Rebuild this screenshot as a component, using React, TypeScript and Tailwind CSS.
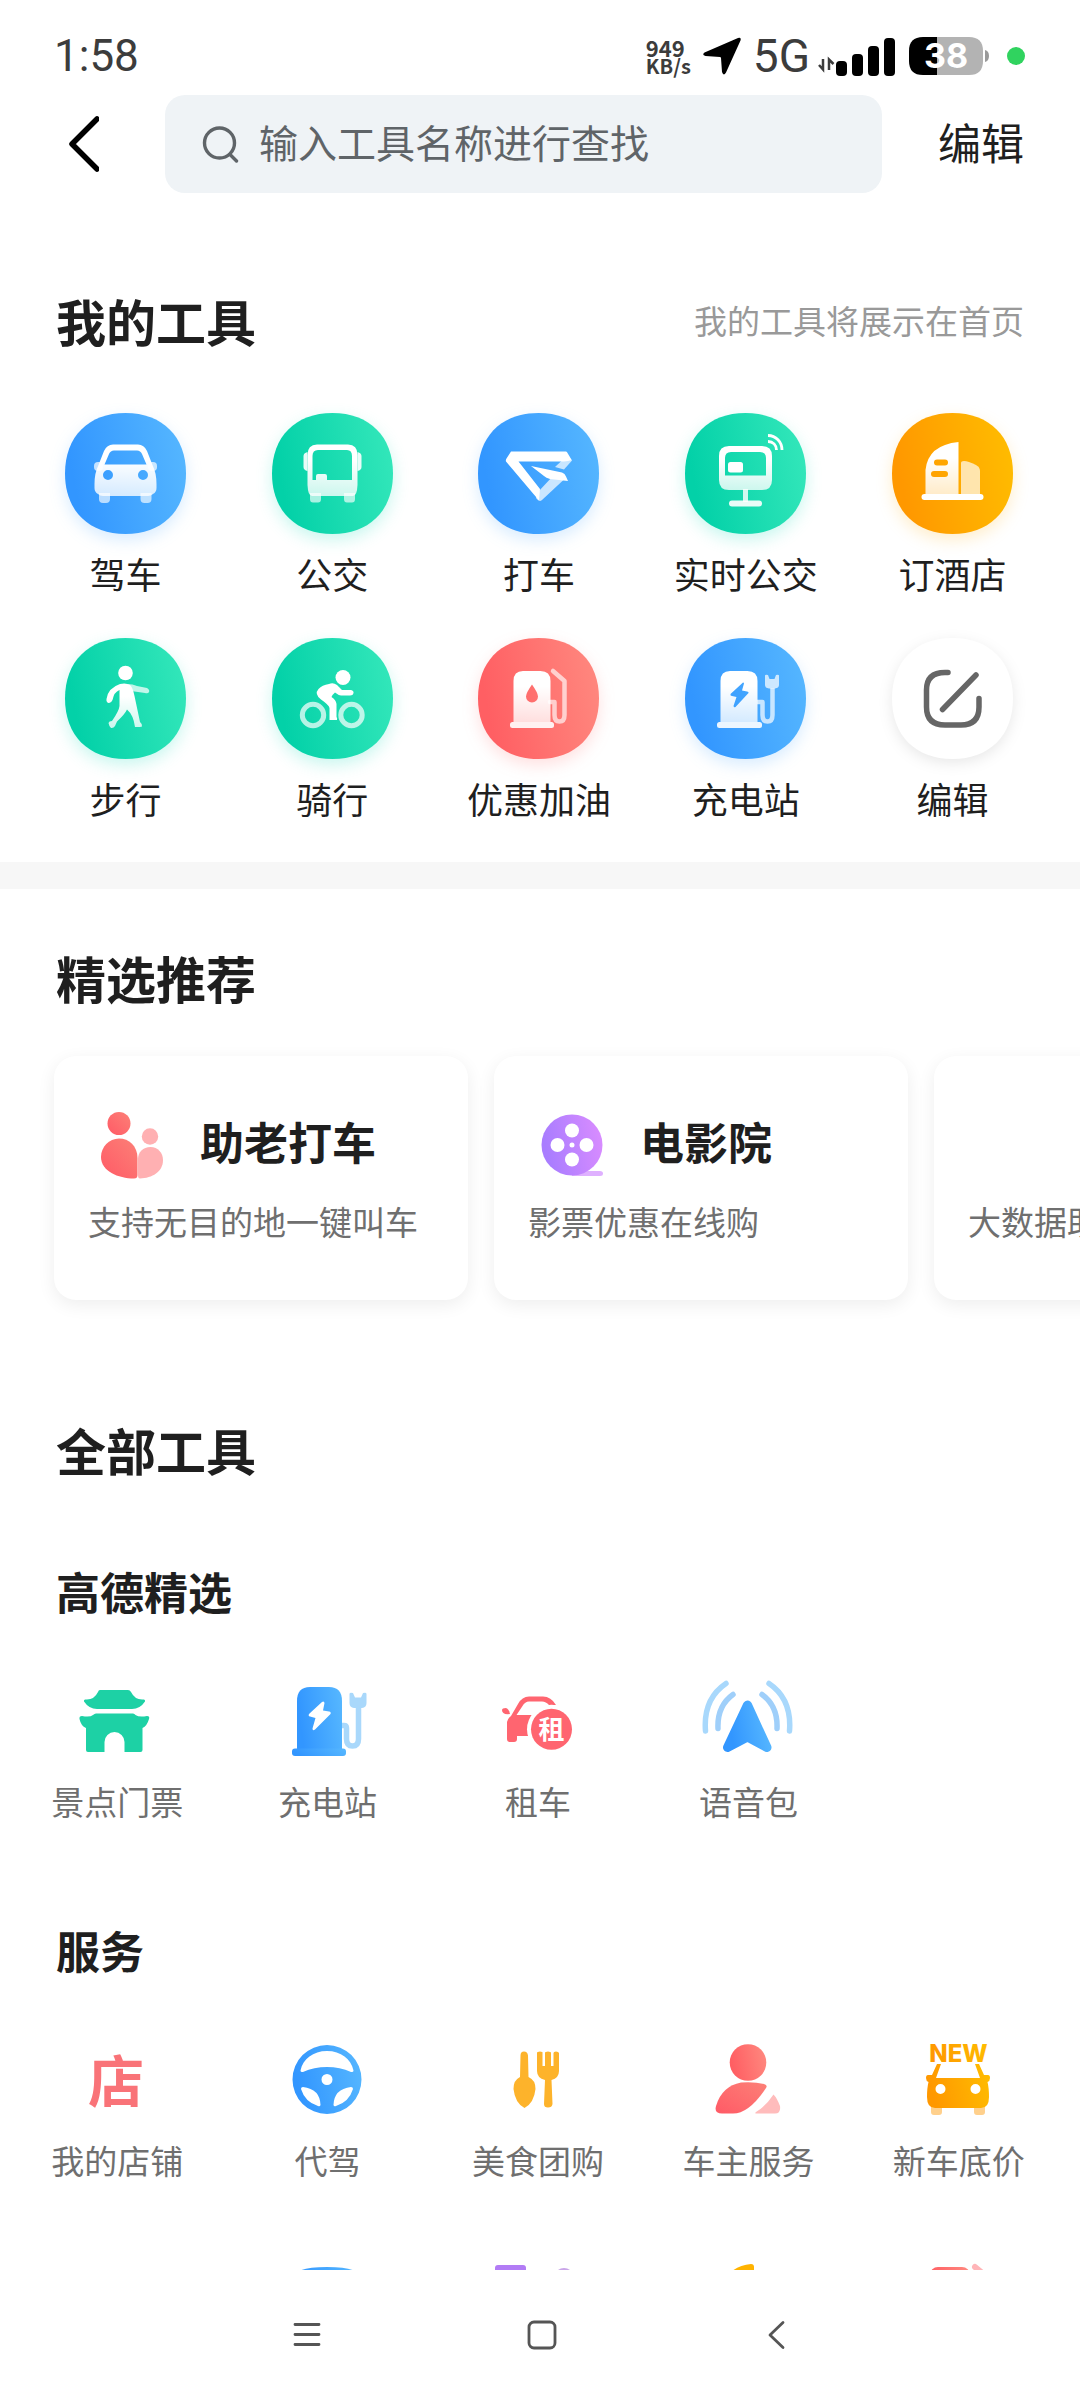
import type { ReactNode } from 'react';

/* ---------- shared paint definitions ---------- */

function PaintDefs() {
  return (
    <svg className="absolute size-0" aria-hidden="true">
      <defs>
        <linearGradient id="blue" x1="0" y1="0.2" x2="1" y2="0">
          <stop offset="0" stopColor="#3296ff" />
          <stop offset="1" stopColor="#57b8ff" />
        </linearGradient>
        <linearGradient id="green" x1="0" y1="0.2" x2="1" y2="0">
          <stop offset="0" stopColor="#03d1a8" />
          <stop offset="1" stopColor="#36e8bb" />
        </linearGradient>
        <linearGradient id="orange" x1="0" y1="0.2" x2="1" y2="0">
          <stop offset="0" stopColor="#ff9800" />
          <stop offset="1" stopColor="#ffbe00" />
        </linearGradient>
        <linearGradient id="red" x1="0" y1="0.2" x2="1" y2="0">
          <stop offset="0" stopColor="#ff5f63" />
          <stop offset="1" stopColor="#ff8a80" />
        </linearGradient>
        <linearGradient id="purple" x1="0" y1="0.2" x2="1" y2="0">
          <stop offset="0" stopColor="#a97dff" />
          <stop offset="1" stopColor="#dc8dff" />
        </linearGradient>
        <linearGradient id="coral" x1="0" y1="1" x2="1" y2="0">
          <stop offset="0" stopColor="#ff5a66" />
          <stop offset="1" stopColor="#fc8077" />
        </linearGradient>
        <linearGradient id="fade" x1="0" y1="0" x2="0" y2="1">
          <stop offset="0.3" stopColor="#fff" />
          <stop offset="1" stopColor="#fff" stopOpacity="0.78" />
        </linearGradient>
      </defs>
    </svg>
  );
}

const SQUIRCLE =
  'M60.5 0C97.500 0 121 23.500 121 60.5S97.500 121 60.5 121S0 97.500 0 60.5S23.500 0 60.5 0Z';

/* ---------- status bar ---------- */

function StatusBar() {
  return (
    <div className="flex h-[95px] shrink-0 items-center justify-between pt-4 pr-[55px] pl-[54px] font-[Roboto,sans-serif] text-[#3c3c3c]">
      <span className="text-[44px] leading-none">1:58</span>
      <div className="flex items-center">
        <div className="mr-3 flex flex-col font-['Noto_Sans_CJK_SC',sans-serif] font-bold">
          <span className="text-[22px] leading-[20px]">949</span>
          <span className="text-[20px] leading-[18px]">KB/s</span>
        </div>
        <svg className="mr-3 h-[38px] w-[38px]" viewBox="0 0 38 38" fill="#000">
          <path d="M35 1Q38.500 0 37.500 3.500L23 35.500Q20.500 39.500 19 35L18 21Q17.800 20 17 20L2.500 19Q-1.500 18 1.500 15.500Z" />
        </svg>
        <span className="mr-2 text-[46px] leading-none">5G</span>
        <svg className="mr-3.5 h-[40px] w-[77px]" viewBox="0 0 77 40" fill="#000">
          <path d="M5 23V33.500L1 29M11 34V23.500L15.500 28" fill="none" stroke="#3c3c3c" strokeWidth="2.500" />
          <rect x="18" y="25" width="11" height="15" rx="4" />
          <rect x="34" y="18" width="11" height="22" rx="4" />
          <rect x="50" y="10" width="11" height="30" rx="4" />
          <rect x="66" y="2" width="11" height="38" rx="4" />
        </svg>
        <svg className="mr-[18px] h-[38px] w-[80px] overflow-visible" viewBox="0 0 80 38">
          <path d="M14 0H60Q74 0 74 14V24Q74 38 60 38H14Z" fill="#b3b3b3" />
          <path d="M28 0H14Q0 0 0 14V24Q0 38 14 38H28Z" fill="#000" />
          <path d="M76 13Q80 14 80 19T76 25Z" fill="#9a9a9a" />
          <text x="37" y="31" textAnchor="middle" fontFamily="Inter, sans-serif" fontWeight="700" fontSize="34" fill="#fff">
            38
          </text>
        </svg>
        <span className="size-[18px] rounded-full bg-[#30d35f]" />
      </div>
    </div>
  );
}

/* ---------- header ---------- */

function Header() {
  return (
    <header className="flex h-[98px] shrink-0 items-center">
      <button type="button" aria-label="返回" className="flex h-full w-[165px] items-center justify-center">
        <svg className="h-[56px] w-[32px]" viewBox="0 0 32 56" fill="none" stroke="#000" strokeWidth="5.500" strokeLinecap="round" strokeLinejoin="round">
          <path d="M30 3L5 28L30 53" />
        </svg>
      </button>
      <label className="flex h-full min-w-0 flex-1 items-center gap-5 rounded-[20px] bg-[#eff3f6] pl-[37px]">
        <svg className="h-[37px] w-[37px] shrink-0" viewBox="0 0 37 37" fill="none" stroke="#5f6468" strokeWidth="3.400" strokeLinecap="round">
          <circle cx="17.500" cy="17" r="15" />
          <path d="M28 28.500L34.500 35" />
        </svg>
        <input
          type="search"
          aria-label="查找工具"
          placeholder="输入工具名称进行查找"
          className="h-full min-w-0 flex-1 bg-transparent pb-1.5 text-[39px] text-[#222] outline-none placeholder:text-[#5f6468]"
        />
      </label>
      <button type="button" className="h-full w-[198px] pb-1.5 text-[43px] leading-[60px] text-[#1f1f1f]">
        编辑
      </button>
    </header>
  );
}

/* ---------- round tool tiles ---------- */

const glow = {
  blue: 'drop-shadow-[0_6px_8px_rgba(60,160,255,0.2)]',
  green: 'drop-shadow-[0_6px_8px_rgba(10,220,180,0.22)]',
  orange: 'drop-shadow-[0_6px_8px_rgba(255,170,0,0.2)]',
  red: 'drop-shadow-[0_6px_8px_rgba(255,100,100,0.2)]',
  white: 'drop-shadow-[0_4px_7px_rgba(0,0,0,0.09)]',
};

type Tone = keyof typeof glow;

const myTools: { name: string; tone: Tone; art: ReactNode }[] = [
  {
    name: '驾车',
    tone: 'blue',
    art: (
      <>
        <rect x="29" y="49" width="9" height="9" rx="4" fillOpacity="0.7" />
        <rect x="83" y="49" width="9" height="9" rx="4" fillOpacity="0.7" />
        <path d="M34 80H45V86Q45 90 41 90H38Q34 90 34 86ZM75.500 80H86.500V86Q86.500 90 82.500 90H79.500Q75.500 90 75.500 86Z" fillOpacity="0.65" />
        <path
          fill="url(#fade)"
          fillRule="evenodd"
          d="M48 31.500H73Q79 31.500 82 38L87.500 52Q91.500 60 91.500 71V75Q91.500 79 88 81Q86 83 83 83H38Q35 83 33 81Q29.500 79 29.500 75V71Q29.500 60 33.500 52L39 38Q42 31.500 48 31.500ZM49 37.500Q45.500 37.500 44 41L39.500 51.500H81.500L77 41Q75.500 37.500 72 37.500ZM43 57A5 5 0 1 0 43 67A5 5 0 1 0 43 57ZM78 57A5 5 0 1 0 78 67A5 5 0 1 0 78 57Z"
        />
      </>
    ),
  },
  {
    name: '公交',
    tone: 'green',
    art: (
      <>
        <path d="M35.500 39Q31.500 40 31.500 43V54Q31.500 57 35.500 58ZM85.500 39Q89.500 40 89.500 43V54Q89.500 57 85.500 58Z" fillOpacity="0.9" />
        <path d="M38 80H49V86Q49 89.500 46 89.500H41Q38 89.500 38 86ZM72 80H83V86Q83 89.500 80 89.500H75Q72 89.500 72 86Z" fillOpacity="0.65" />
        <path
          fill="url(#fade)"
          fillRule="evenodd"
          d="M45 31.500H76Q85.500 31.500 85.500 42V72Q85 83 81 83H40Q36 83 35.500 72V42Q35.500 31.500 45 31.500ZM46 37Q40.500 37 40.500 43V67H44V63Q44 61 46 61H53Q55 61 55 63V67H80V43Q80 37 75 37Z"
        />
      </>
    ),
  },
  {
    name: '打车',
    tone: 'blue',
    art: (
      <>
        <path d="M77 54L84 47.500H94L86 56.500Z" fillOpacity="0.7" />
        <path d="M60 79L75 63L86 66.500L64 87Q61 89.500 58 85Z" fillOpacity="0.72" />
        <path d="M33 38.500H88Q89 38.500 89.500 40L94 47.500L86 48.500H40.500L62 76L61 87.500L28 48.500Q27.500 47 28.500 45.500Z" />
        <path d="M53 53L84 59.500Q87 60.500 88 63.500L90 68L72 66Q68 65 66 63Z" />
      </>
    ),
  },
  {
    name: '实时公交',
    tone: 'green',
    art: (
      <>
        <rect x="58" y="76" width="5" height="13" fillOpacity="0.8" />
        <rect x="44" y="87.500" width="33" height="6" rx="3" fillOpacity="0.9" />
        <path
          fill="url(#fade)"
          fillRule="evenodd"
          d="M44 33H77Q87 33 87 43V67Q87 77 77 77H44Q34 77 34 67V43Q34 33 44 33ZM46 39Q40 39 40 45V62.500H81V45Q81 39 75 39Z"
        />
        <rect x="43" y="49" width="15" height="10.500" rx="2.500" />
        <path d="M83 22.500C91 22.500 97 29 97 37M83 28.500C88 28.500 91.500 32 91.500 37" fill="none" stroke="#fff" strokeWidth="2.800" />
      </>
    ),
  },
  {
    name: '订酒店',
    tone: 'orange',
    art: (
      <>
        <path d="M69 50Q69 48 72 48Q76 48 84 52Q88 54 88 58V83H69Z" fillOpacity="0.68" />
        <path
          fill="url(#fade)"
          fillRule="evenodd"
          d="M66.500 29V83H33.500V57Q36 32 66.500 29ZM45 46.500A3 3 0 0 0 45 52.500H53A3 3 0 0 0 53 46.500ZM42 58A3 3 0 0 0 42 64H53A3 3 0 0 0 53 58Z"
        />
        <rect x="29.500" y="81" width="62" height="6" rx="3" />
      </>
    ),
  },
  {
    name: '步行',
    tone: 'green',
    art: (
      <>
        <circle cx="60.500" cy="35" r="7.300" />
        <path d="M62 46Q68 46 72 48L82 50Q85 52 84 54Q83 56 80 55L66 53Z" fillOpacity="0.72" />
        <path
          fill="url(#fade)"
          d="M55 46Q61 44.500 65 47Q68 50 69.500 58L75 84Q77.500 86 77 88.500Q76 89 70 89Q68.500 77 62 71.500Q60 76 52 83.500L50 88Q48.500 90.500 46 90Q44 88 43.500 85Q44 83 47 83Q54 73 54.500 68V52Q49 54 47.500 62Q46 65.500 43.500 65Q41 64 41.500 61Q43 50 55 46Z"
        />
      </>
    ),
  },
  {
    name: '骑行',
    tone: 'green',
    art: (
      <>
        <circle cx="41" cy="77" r="10.700" fill="none" stroke="#fff" strokeOpacity="0.7" strokeWidth="5" />
        <circle cx="79.500" cy="77" r="10.700" fill="none" stroke="#fff" strokeOpacity="0.7" strokeWidth="5" />
        <circle cx="71" cy="39.500" r="7.500" />
        <path d="M57 46Q61 44 65 47L70 52H79Q82 53 81.500 55Q81 57.500 78 57.500H69Q66 57 63 54.500Q60 57 59.500 59Q64 62 64.500 66V79Q65.500 80 65 82H57.500V70Q57 67 49 61.500Q42 56 46.500 51Q50 47 57 46Z" />
      </>
    ),
  },
  {
    name: '优惠加油',
    tone: 'red',
    art: (
      <>
        <path d="M75 33L86.500 43V77Q86.500 83.500 81.500 83.500T76.500 77V64H72" fill="none" stroke="#fff" strokeOpacity="0.65" strokeWidth="4.500" strokeLinejoin="round" strokeLinecap="round" />
        <path
          fill="url(#fade)"
          fillRule="evenodd"
          d="M45 33H62.500Q72.500 33 72.500 43V84H35.500V43Q35.500 33 45 33ZM54 46.500Q48 55 48 58.500A6 6 0 0 0 60 58.500Q60 55 54 46.500Z"
        />
        <rect x="32" y="84" width="44" height="6" rx="2.500" fillOpacity="0.9" />
      </>
    ),
  },
  {
    name: '充电站',
    tone: 'blue',
    art: (
      <>
        <path d="M72 64H77.500V77Q77.500 83.500 82.500 83.500T87.500 77V50" fill="none" stroke="#fff" strokeOpacity="0.7" strokeWidth="4.500" strokeLinejoin="round" />
        <path d="M80 37.500Q80 36.500 83 37L84.500 41H89.500L91 37Q94 36.500 94 37.500V47Q94 50 90 50.500H84Q80 50 80 47Z" fillOpacity="0.72" />
        <path
          fill="url(#fade)"
          fillRule="evenodd"
          d="M45 33H62.500Q72.500 33 72.500 43V84H35.500V43Q35.500 33 45 33ZM58 44.500L45.500 56Q45 58 47 58L51.500 59L48.500 68Q49 70 50.500 69L63.500 55Q64 53.500 62 53.500L57 52.500L59 45.500Q59 44.500 58 44.500Z"
        />
        <rect x="32" y="84" width="45" height="6" rx="2.500" fillOpacity="0.9" />
      </>
    ),
  },
  {
    name: '编辑',
    tone: 'white',
    art: (
      <path
        d="M56 34.500H53Q34.500 34.500 34.500 52V69Q34.500 87 53 87H69Q87 87 87 69V60.500M50.500 71.500L84 37"
        fill="none"
        stroke="#666"
        strokeWidth="5.500"
        strokeLinecap="round"
      />
    ),
  },
];

const tileFill: Record<Tone, string> = {
  blue: 'url(#blue)',
  green: 'url(#green)',
  orange: 'url(#orange)',
  red: 'url(#red)',
  white: '#fff',
};

function MyTools() {
  return (
    <section className="pt-[91px] pb-10">
      <div className="flex items-center justify-between px-14">
        <h2 className="text-[50px] leading-[72px] font-bold">我的工具</h2>
        <p className="text-[33px] leading-[44px] text-[#999]">我的工具将展示在首页</p>
      </div>
      <div className="mt-[57px] grid grid-cols-5 gap-y-[41px] pr-6 pl-[22px]">
        {myTools.map((tool) => (
          <button key={tool.name} type="button" className="flex flex-col items-center gap-[15px]">
            <svg className={`size-[121px] overflow-visible ${glow[tool.tone]}`} viewBox="0 0 121 121" fill="#fff">
              <path d={SQUIRCLE} fill={tileFill[tool.tone]} />
              {tool.art}
            </svg>
            <span className="text-[36px] leading-[48px] whitespace-nowrap">{tool.name}</span>
          </button>
        ))}
      </div>
    </section>
  );
}

/* ---------- featured cards ---------- */

const featured: { title?: string; desc: string; art?: ReactNode }[] = [
  {
    title: '助老打车',
    desc: '支持无目的地一键叫车',
    art: (
      <>
        <circle cx="31" cy="22.500" r="11.500" fill="url(#coral)" />
        <path d="M31 37.500C41 37.500 49.500 45 49.500 57V74Q49.500 77.500 46 77.500C30 77.500 13 70 13 56C13 46 21 37.500 31 37.500Z" fill="url(#coral)" />
        <circle cx="62" cy="35.500" r="8.200" fill="#ffb0b2" />
        <path d="M62.500 46C70 46 75 52 75 59C75 71 64 77 52 77.500Q50 77.500 50 74V58C50 51 55 46 62.500 46Z" fill="#ffb0b2" />
      </>
    ),
  },
  {
    title: '电影院',
    desc: '影票优惠在线购',
    art: (
      <>
        <path d="M44 70H72Q75 70 75 72.500T72 75H44Z" fill="#dfb0ff" />
        <circle cx="44" cy="44" r="30.500" fill="url(#purple)" />
        <g fill="#fff">
          <circle cx="44" cy="29.500" r="7" />
          <circle cx="44" cy="58.500" r="7" />
          <circle cx="29.500" cy="44" r="7" />
          <circle cx="58.500" cy="44" r="7" />
          <circle cx="44" cy="44" r="2.500" />
        </g>
      </>
    ),
  },
  { desc: '大数据助' },
];

function Featured() {
  return (
    <section className="pt-[52px]">
      <h2 className="px-14 text-[50px] leading-[72px] font-bold">精选推荐</h2>
      <div className="mt-[3px] flex gap-[26px] overflow-x-auto py-10 pl-[54px] [scrollbar-width:none]">
        {featured.map((item) => (
          <article
            key={item.desc}
            className="w-[414px] shrink-0 rounded-[22px] bg-white px-[34px] pt-[45px] pb-[57px] shadow-[0_5px_18px_rgba(0,0,0,0.07)]"
          >
            <div className="flex h-[88px] gap-6">
              {item.art && (
                <svg className="size-[88px] shrink-0" viewBox="0 0 88 88" aria-hidden="true">
                  {item.art}
                </svg>
              )}
              {item.title && <h3 className="text-[44px] leading-[80px] font-bold">{item.title}</h3>}
            </div>
            <p className="mt-2.5 text-[33px] leading-[44px] whitespace-nowrap text-[#6f6f6f]">{item.desc}</p>
          </article>
        ))}
      </div>
    </section>
  );
}

/* ---------- all tools ---------- */

type Entry = { name: string; art: ReactNode };

const picks: Entry[] = [
  {
    name: '景点门票',
    art: (
      <g fill="#1dd1a5">
        <path d="M27 13H55Q57 13 58 15Q62 23 70 22.500Q72.500 22 72 24.500Q67 32 59 32H24Q16 32 11 24.500Q10.500 22 13 22.500Q21 23 25 15Q25.500 13 27 13Z" />
        <path d="M23 36.500H60Q61.500 36.500 62.500 38Q66 40.500 74 39Q77 39 76 42Q74 49 69.500 51V73Q69.500 75 67.500 75H51.500V65A10 10 0 0 0 31.500 65V75H15Q13 75 13 73V51Q8 49 6.500 42Q6 39 9 39Q17 40.500 20 38Q21.500 36.500 23 36.500Z" />
      </g>
    ),
  },
  {
    name: '充电站',
    art: (
      <>
        <path d="M56 48.500H60Q62.500 48.500 62.500 51V62Q62.500 69 68.500 69T74.500 62V30" fill="none" stroke="#a9d8fb" strokeWidth="5.500" />
        <path d="M65.500 17Q65.500 15 69 16L71 20.500H77L79 16Q82.500 15 82.500 17V26Q82.500 30.500 78 31H70Q65.500 30.500 65.500 26Z" fill="#a9d8fb" />
        <path d="M26 10H45Q58 10 58 24V73H13V24Q13 10 26 10Z" fill="url(#blue)" />
        <rect x="8" y="71.500" width="54" height="7.500" rx="3" fill="url(#blue)" />
        <path d="M38 25L25 37Q24 39 26 39.500L31.500 41L28.500 51.500Q28.500 54.500 31 52.500L46.500 37Q47.500 35 45 34.500L39 33.500L40.500 26Q40 23.500 38 25Z" fill="#fff" />
      </>
    ),
  },
  {
    name: '租车',
    art: (
      <>
        <path d="M8 33Q8 31 12 31Q15 32 16 37Q8 38 8 33Z" fill="#ff6570" />
        <path
          fill="#ff6570"
          fillRule="evenodd"
          d="M13 45Q14 41 17 39L24 27Q28 19.500 35 19.500H49Q57 19.500 62 28H55Q52 24.500 48 24.500H35Q31 24.500 28.500 29L22.500 38H40V59H23V62Q23 65 20 65H16Q13 65 13 62Z"
        />
        <circle cx="57.500" cy="52.300" r="24.500" fill="#fff" />
        <circle cx="57.500" cy="52.300" r="20.500" fill="#ff6570" />
        <text x="57.500" y="61.500" textAnchor="middle" fontSize="26" fontWeight="700" fill="#fff">
          租
        </text>
      </>
    ),
  },
  {
    name: '语音包',
    art: (
      <>
        <path d="M43.500 28L23.500 70.500L43.500 60L63 70.500Z" fill="url(#blue)" stroke="url(#blue)" strokeWidth="9" strokeLinejoin="round" />
        <g fill="none" strokeWidth="5.500" strokeLinecap="round">
          <path d="M29 17.500Q13 29 14 51.500M58 17.500Q74 29 73 51.500" stroke="#9fcffa" />
          <path d="M22 6.500Q-1 22 1.500 54M65 6.500Q88 22 85.500 54" stroke="#a8d8fc" />
        </g>
      </>
    ),
  },
];

const services: Entry[] = [
  {
    name: '我的店铺',
    art: (
      <text x="43" y="66" textAnchor="middle" fontSize="56" fontWeight="700" fill="#f97378">
        店
      </text>
    ),
  },
  {
    name: '代驾',
    art: (
      <path
        fill="url(#blue)"
        fillRule="evenodd"
        d="M43 9A34.500 34.500 0 1 0 43 78A34.500 34.500 0 1 0 43 9ZM43 15C57 15 67 23 69.500 34.500Q69.500 36.500 67 36Q56 31 43 31T19 36Q16.500 36.500 16.500 34.500C19 23 29 15 43 15ZM43 38A5.500 5.500 0 1 1 43 49A5.500 5.500 0 1 1 43 38ZM19 51Q36 53 36.500 69Q36 71 34 70Q21 66 17 53Q17 51 19 51ZM67 51Q50 53 49.500 69Q50 71 52 70Q65 66 69 53Q69 51 67 51Z"
      />
    ),
  },
  {
    name: '美食团购',
    art: (
      <g fill="#fdb32b">
        <path d="M26.500 19.500Q26.500 15.500 30 15.500T34 19.500L34.500 41Q41.500 44 41.500 53Q40 67 30.500 72Q21 67 19.500 53Q19.500 44 26 41Z" />
        <path d="M43 17Q43 15.500 46 15.500T48.500 17V30H51V17Q51 15.500 54 15.500T57 17V30H59.500V17Q59.500 15.500 62 15.500T65 17V35Q65 42 57.500 44L58.500 68Q58 71.500 54 71.500T50 68L51 44Q43 42 43 35Z" />
      </g>
    ),
  },
  {
    name: '车主服务',
    art: (
      <>
        <circle cx="44" cy="26.500" r="18.300" fill="url(#red)" />
        <path d="M37 46.500Q50 45.500 60 48Q64 49 62 52Q45 77.500 29 77.500H18Q10 77.500 12 70Q18 50 37 46.500Z" fill="url(#coral)" />
        <path d="M69.500 58.500Q73 62 76 70Q77 77.500 71 77.500H51.500Q51 76.500 52 76Q62 70 69.500 58.500Z" fill="#ffbcbc" />
      </>
    ),
  },
  {
    name: '新车底价',
    art: (
      <>
        <text x="43.500" y="26" textAnchor="middle" fontFamily="Inter, sans-serif" fontSize="24" fontWeight="800" fill="url(#orange)">
          NEW
        </text>
        <path d="M16 70H27V76Q27 79 24 79H19Q16 79 16 76ZM59 70H70V76Q70 79 67 79H62Q59 79 59 76Z" fill="#ffd08c" />
        <path
          fill="url(#orange)"
          fillRule="evenodd"
          d="M22 28H26L21 42H65L60 28H64L69 39H73Q75 39 75 42Q75 45 72.500 46Q74 52 74 61Q74 72 66 72H20Q12 72 12 61Q12 52 13.500 46Q11 45 11 42Q11 39 13 39H17ZM25.500 48A5 5 0 1 0 25.500 58A5 5 0 1 0 25.500 48ZM60.500 48A5 5 0 1 0 60.500 58A5 5 0 1 0 60.500 48Z"
        />
      </>
    ),
  },
];

/* Icons of the next row, which starts at the lower edge of the scroll area. */
const upcoming: ReactNode[] = [
  null,
  <path d="M43 9Q66 9 72 14Q77 20 77 42V66H9V42Q9 20 14 14Q20 9 43 9Z" fill="url(#blue)" />,
  <>
    <rect x="1" y="7" width="31" height="60" rx="3" fill="#b27cf5" />
    <circle cx="70" cy="20" r="10" fill="#c9a6e8" />
  </>,
  <path d="M50 9Q50 6 47 6Q34 7 26 15V70H50Z" fill="#ffb300" />,
  <>
    <rect x="15" y="9" width="40" height="62" rx="8" fill="url(#red)" />
    <path d="M60 9L72 19" stroke="#ffb5b8" strokeWidth="6" strokeLinecap="round" />
  </>,
];

function EntryIcon({ children }: { children: ReactNode }) {
  return (
    <svg className="size-[88px] overflow-visible font-['Noto_Sans_CJK_SC',sans-serif]" viewBox="0 0 88 88" aria-hidden="true">
      {children}
    </svg>
  );
}

function EntryGroup({ title, entries, children }: { title: string; entries: Entry[]; children?: ReactNode }) {
  return (
    <section>
      <h3 className="px-14 text-[44px] leading-[64px] font-bold">{title}</h3>
      <div className="mt-[54px] grid grid-cols-5 gap-y-[76px] pr-4 pl-3">
        {entries.map((entry) => (
          <button key={entry.name} type="button" className="flex flex-col items-center gap-[14px]">
            <EntryIcon>{entry.art}</EntryIcon>
            <span className="text-[33px] leading-[44px] whitespace-nowrap text-[#6f6f6f]">{entry.name}</span>
          </button>
        ))}
        {children}
      </div>
    </section>
  );
}

function AllTools() {
  return (
    <section className="pt-[73px]">
      <h2 className="px-14 text-[50px] leading-[72px] font-bold">全部工具</h2>
      <div className="mt-[74px] flex flex-col gap-[95px]">
        <EntryGroup title="高德精选" entries={picks} />
        <EntryGroup title="服务" entries={services}>
          {upcoming.map((art, i) => (
            <div key={i} className="flex justify-center">
              <EntryIcon>{art}</EntryIcon>
            </div>
          ))}
        </EntryGroup>
      </div>
    </section>
  );
}

/* ---------- system navigation ---------- */

function SystemNav() {
  return (
    <nav className="flex h-[130px] shrink-0 items-center justify-center gap-[205px] bg-white pl-1">
      <button type="button" aria-label="最近任务">
        <svg className="size-[30px]" viewBox="0 0 30 30" stroke="#555" strokeWidth="2.800" strokeLinecap="round">
          <path d="M3 4.500H27M3 14.500H27M3 24.500H27" />
        </svg>
      </button>
      <button type="button" aria-label="主屏幕">
        <svg className="size-[30px]" viewBox="0 0 30 30" fill="none" stroke="#555" strokeWidth="2.800">
          <rect x="2" y="2" width="26" height="26" rx="5" />
        </svg>
      </button>
      <button type="button" aria-label="返回上一页">
        <svg className="size-[30px]" viewBox="0 0 30 30" fill="none" stroke="#555" strokeWidth="2.800" strokeLinecap="round" strokeLinejoin="round">
          <path d="M21 2.500L8 15L21 27.500" />
        </svg>
      </button>
    </nav>
  );
}

export default function App() {
  return (
    <div className="flex h-screen flex-col bg-white font-['Noto_Sans_CJK_SC',sans-serif] text-[#1f1f1f]">
      <PaintDefs />
      <StatusBar />
      <Header />
      <main className="min-h-0 flex-1 overflow-y-auto [scrollbar-width:none]">
        <MyTools />
        <div className="h-[27px] bg-[#f7f7f7]" />
        <Featured />
        <AllTools />
      </main>
      <SystemNav />
    </div>
  );
}
